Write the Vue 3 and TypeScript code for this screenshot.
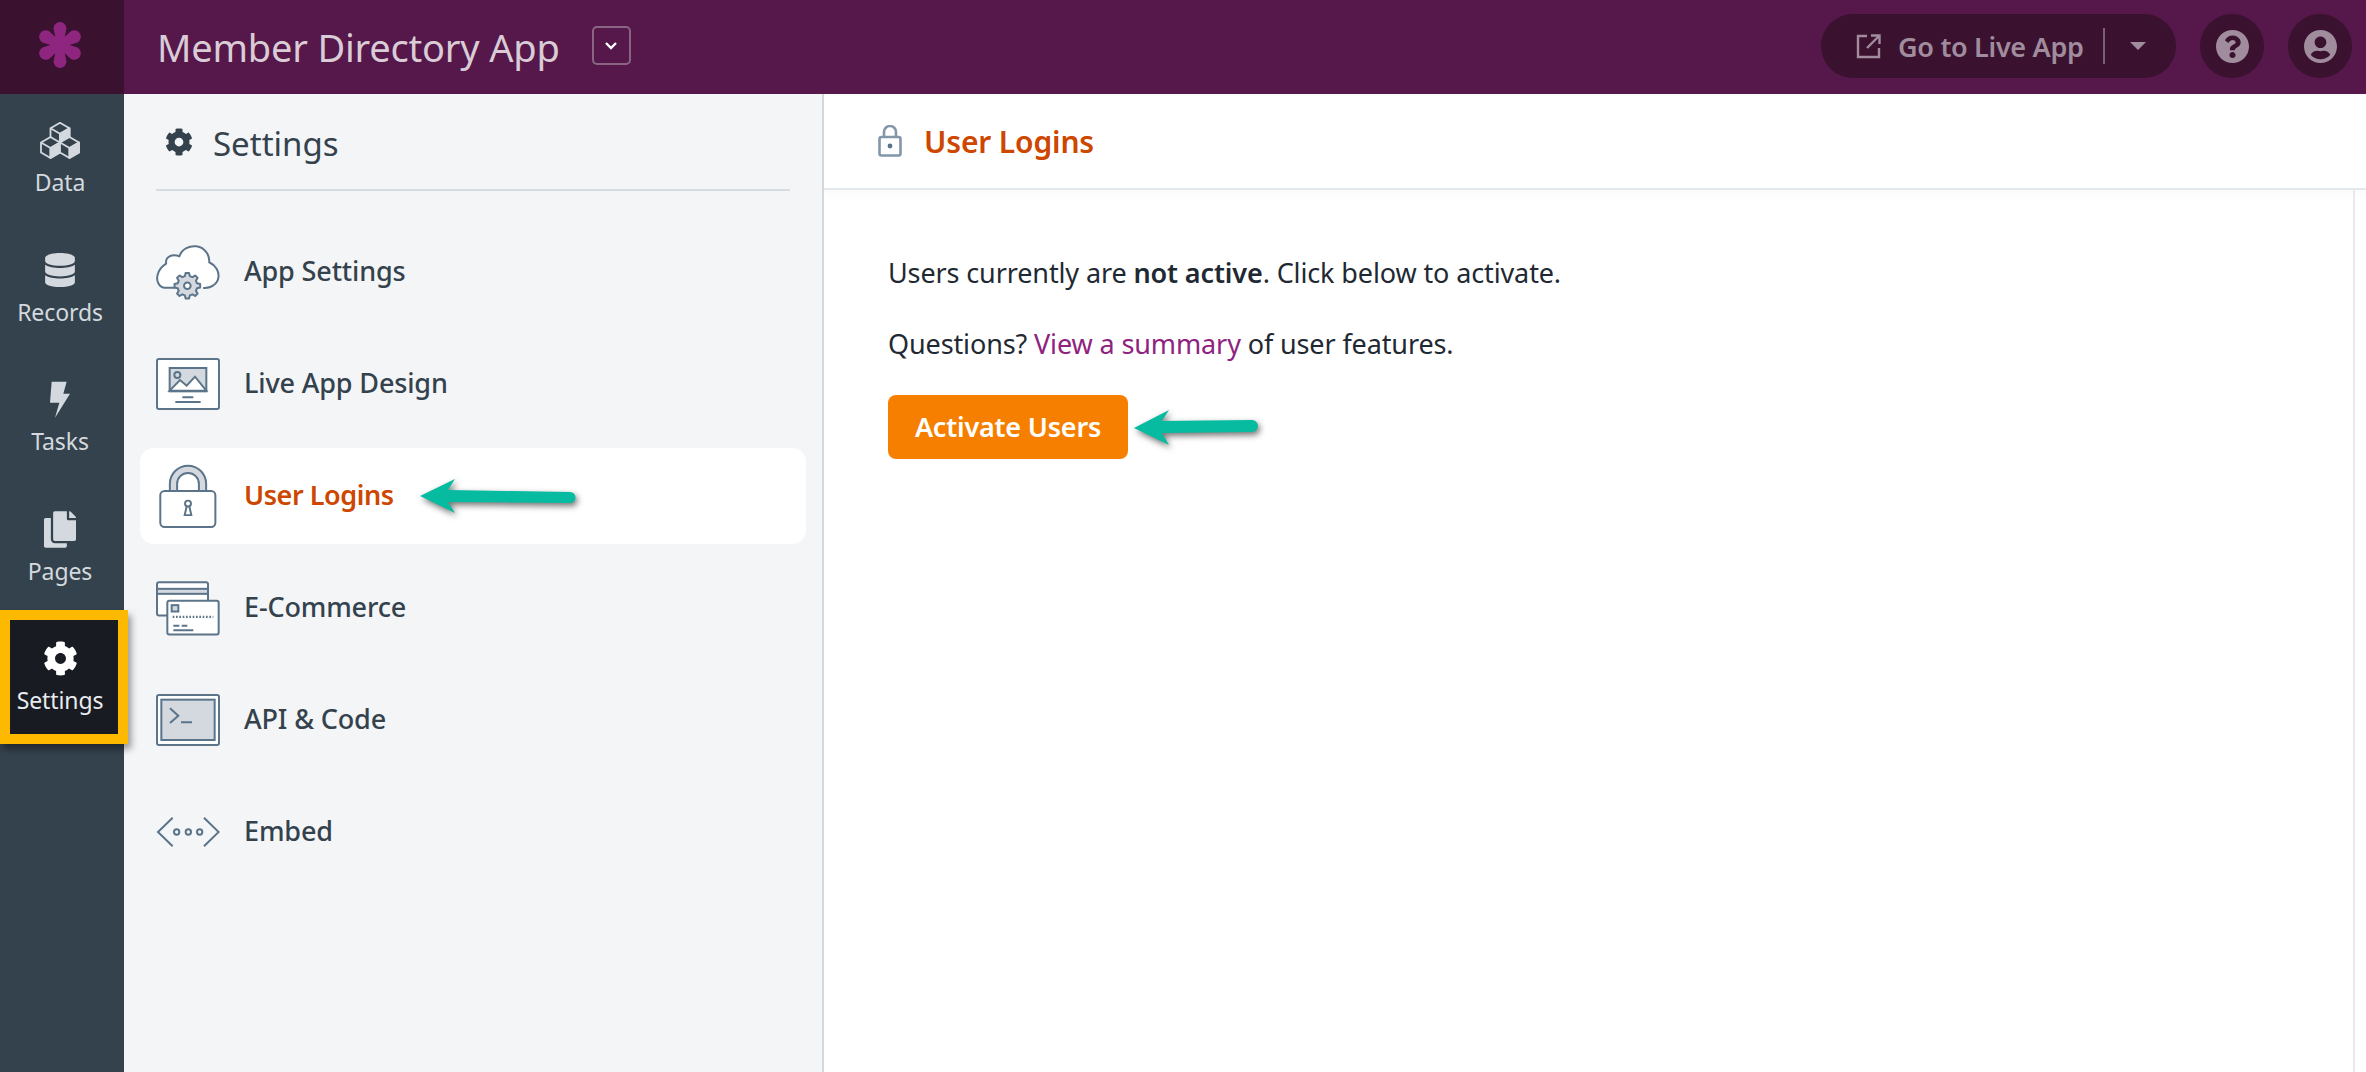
<script setup lang="ts">
const railItems = [
  { key: 'data', label: 'Data' },
  { key: 'records', label: 'Records' },
  { key: 'tasks', label: 'Tasks' },
  { key: 'pages', label: 'Pages' },
  { key: 'settings', label: 'Settings' },
]
const menuItems = [
  { key: 'app', label: 'App Settings' },
  { key: 'design', label: 'Live App Design' },
  { key: 'logins', label: 'User Logins' },
  { key: 'commerce', label: 'E-Commerce' },
  { key: 'api', label: 'API & Code' },
  { key: 'embed', label: 'Embed' },
]
const cubes = [
  { x: 20, y: 0.8 },
  { x: 10.5, y: 15 },
  { x: 29.5, y: 15 },
]
function cubeHex(c: { x: number; y: number }): string {
  return `M${c.x} ${c.y}l9.5 5.5v10l-9.5 5.5-9.5-5.5v-10z`
}
function cubeRight(c: { x: number; y: number }): string {
  return `M${c.x} ${c.y + 11}l9.5-5.5v10l-9.5 5.5z`
}
function cubeTop(c: { x: number; y: number }): string {
  return `M${c.x - 9.5} ${c.y + 5.5}l9.5 5.5 9.5-5.5M${c.x} ${c.y + 11}v10`
}
function gearPath(cx: number, cy: number, outer: number, inner: number, teeth: number): string {
  const pts: string[] = []
  const step = (Math.PI * 2) / teeth
  for (let i = 0; i < teeth; i++) {
    const a = i * step
    const list: [number, number][] = [
      [a - step * 0.32, inner],
      [a - step * 0.17, outer],
      [a + step * 0.17, outer],
      [a + step * 0.32, inner],
    ]
    for (const [t, r] of list) {
      pts.push(`${(cx + Math.cos(t) * r).toFixed(1)} ${(cy + Math.sin(t) * r).toFixed(1)}`)
    }
  }
  return 'M' + pts.join('L') + 'Z'
}
const smallGear = gearPath(172, 197, 39, 30, 8)
const cog =
  'M487.4 315.7l-42.6-24.6c4.3-23.2 4.3-47 0-70.2l42.6-24.6c4.9-2.8 7.1-8.6 5.5-14-11.1-35.6-30-67.8-54.7-94.6-3.8-4.1-10-5.1-14.8-2.3L380.8 110c-17.9-15.4-38.5-27.3-60.8-35.1V25.8c0-5.6-3.9-10.5-9.4-11.7-36.7-8.2-74.3-7.8-109.2 0-5.5 1.2-9.4 6.1-9.4 11.7V75c-22.2 7.9-42.8 19.8-60.8 35.1L88.7 85.5c-4.9-2.8-11-1.9-14.8 2.3-24.7 26.7-43.6 58.9-54.7 94.6-1.7 5.4.6 11.2 5.5 14L67.3 221c-4.3 23.2-4.3 47 0 70.2l-42.6 24.6c-4.9 2.8-7.1 8.6-5.5 14 11.1 35.6 30 67.8 54.7 94.6 3.8 4.1 10 5.1 14.8 2.3l42.6-24.6c17.9 15.4 38.5 27.3 60.8 35.1v49.2c0 5.6 3.9 10.5 9.4 11.7 36.7 8.2 74.3 7.8 109.2 0 5.5-1.2 9.4-6.1 9.4-11.7v-49.2c22.2-7.9 42.8-19.8 60.8-35.1l42.6 24.6c4.9 2.8 11 1.9 14.8-2.3 24.7-26.7 43.6-58.9 54.7-94.6 1.5-5.5-.7-11.3-5.6-14.1zM256 336c-44.1 0-80-35.9-80-80s35.9-80 80-80 80 35.9 80 80-35.9 80-80 80z'
</script>

<template>
  <div class="app">
    <header class="topbar">
      <div class="logo">
        <svg width="46" height="46" viewBox="-23 -23 46 46">
          <path
            v-for="a in [0, 60, 120, 180, 240, 300]"
            :key="a"
            :transform="`rotate(${a})`"
            d="M-3 0 L-6.5 -16.5 A6.5 6.5 0 0 1 6.5 -16.5 L3 0 Z"
            fill="#8e2680"
          />
        </svg>
      </div>
      <div class="app-title">Member Directory App</div>
      <button class="chev-btn">
        <svg width="14" height="10" viewBox="0 0 14 10"><path d="M2 2l5 5 5-5" fill="none" stroke="#fff" stroke-width="2.4" /></svg>
      </button>
      <div class="top-right">
        <div class="live-pill">
          <svg class="ext" width="25" height="25" viewBox="0 0 25 25" fill="none" stroke="#a08c9d" stroke-width="2.4">
            <path d="M11 2H2v21h21v-9" />
            <path d="M11 14L23 2M15 1.5h8.5V10" />
          </svg>
          <span>Go to Live App</span>
          <i class="pill-div"></i>
          <i class="caret"></i>
        </div>
        <div class="round">
          <svg width="33" height="33" viewBox="8 8 496 496"><path fill="#a08c9d" d="M504 256c0 136.997-111.043 248-248 248S8 392.997 8 256C8 119.083 119.043 8 256 8s248 111.083 248 248zM262.655 90c-54.497 0-89.255 22.957-116.549 63.758-3.536 5.286-2.353 12.415 2.715 16.258l34.699 26.31c5.205 3.947 12.621 3.008 16.665-2.122 17.864-22.658 30.113-35.797 57.303-35.797 20.429 0 45.698 13.148 45.698 32.958 0 14.976-12.363 22.667-32.534 33.976C247.128 238.528 216 254.941 216 296v4c0 6.627 5.373 12 12 12h56c6.627 0 12-5.373 12-12v-1.333c0-28.462 83.186-29.647 83.186-106.667 0-58.002-60.165-102-116.531-102zM256 338c-25.365 0-46 20.635-46 46 0 25.364 20.635 46 46 46s46-20.636 46-46c0-25.365-20.635-46-46-46z" /></svg>
        </div>
        <div class="round">
          <svg width="33" height="33" viewBox="0 8 496 496"><path fill="#a08c9d" d="M248 8C111 8 0 119 0 256s111 248 248 248 248-111 248-248S385 8 248 8zm0 96c48.6 0 88 39.4 88 88s-39.4 88-88 88-88-39.4-88-88 39.4-88 88-88zm0 344c-58.7 0-111.3-26.6-146.5-68.2 18.8-35.4 55.6-59.8 98.5-59.8 2.4 0 4.8.4 7.1 1.1 13 4.2 26.6 6.9 40.9 6.9 14.3 0 28-2.7 40.9-6.9 2.3-.7 4.7-1.1 7.1-1.1 42.9 0 79.7 24.4 98.5 59.8C359.3 421.4 306.7 448 248 448z" /></svg>
        </div>
      </div>
    </header>

    <div class="body">
      <nav class="rail">
        <div v-for="item in railItems" :key="item.key" class="rail-item" :class="{ current: item.key === 'settings' }">
          <div class="rail-icon">
            <svg v-if="item.key === 'data'" width="40" height="37" viewBox="0 0 40 37" stroke="#d3d9de" stroke-width="1.8" stroke-linejoin="round">
              <g v-for="(c, i) in cubes" :key="i">
                <path :d="cubeHex(c)" fill="#34424d" />
                <path :d="cubeRight(c)" fill="#d3d9de" />
                <path :d="cubeTop(c)" fill="none" />
              </g>
            </svg>
            <svg v-else-if="item.key === 'records'" width="30" height="34" viewBox="0 0 448 512"><path fill="#d3d9de" d="M448 73.143v45.714C448 159.143 347.667 192 224 192S0 159.143 0 118.857V73.143C0 32.857 100.333 0 224 0s224 32.857 224 73.143zM448 176v102.857C448 319.143 347.667 352 224 352S0 319.143 0 278.857V176c48.125 33.143 136.208 48.572 224 48.572S399.874 209.143 448 176zm0 160v102.857C448 479.143 347.667 512 224 512S0 479.143 0 438.857V336c48.125 33.143 136.208 48.572 224 48.572S399.874 369.143 448 336z" /></svg>
            <svg v-else-if="item.key === 'tasks'" width="20" height="37" viewBox="150 60 60 110"><path fill="#d3d9de" d="M155 62h45l-10 36h20l-45 72 13-45h-28z" /></svg>
            <svg v-else-if="item.key === 'pages'" width="32" height="37" viewBox="0 0 448 512"><path fill="#d3d9de" d="M320 448v40c0 13.255-10.745 24-24 24H24c-13.255 0-24-10.745-24-24V120c0-13.255 10.745-24 24-24h72v296c0 30.879 25.121 56 56 56h168zm0-344V0H152c-13.255 0-24 10.745-24 24v368c0 13.255 10.745 24 24 24h272c13.255 0 24-10.745 24-24V128H344c-13.2 0-24-10.8-24-24zm120.971-31.029L375.029 7.029A24 24 0 0 0 358.059 0H352v96h96v-6.059a24 24 0 0 0-7.029-16.97z" /></svg>
            <svg v-else width="35" height="35" viewBox="0 0 512 512"><path fill="#fff" :d="cog" /></svg>
          </div>
          <div class="rail-label">{{ item.label }}</div>
        </div>
      </nav>

      <aside class="side">
        <div class="side-head">
          <svg width="28" height="28" viewBox="0 0 512 512"><path fill="#34424d" :d="cog" /></svg>
          <span>Settings</span>
        </div>
        <ul class="menu">
          <li v-for="m in menuItems" :key="m.key" class="menu-row" :class="{ on: m.key === 'logins' }">
            <span class="menu-icon">
              <svg v-if="m.key === 'app'" width="64" height="55" viewBox="78 74 192 166" fill="none" stroke="#5b7489" stroke-width="6" stroke-linecap="round">
                <path fill="#fff" d="M133 203H105C85 203 78 180 82 165C86 145 100 135 108 130C105 110 125 100 148 108C155 85 180 75 200 78C225 82 240 105 238 126C258 135 268 155 266 170C264 190 245 205 222 204" />
                <path :d="smallGear" fill="#d3d9de" stroke-linejoin="round" />
                <circle cx="172" cy="197" r="10" fill="#fff" />
              </svg>
              <svg v-else-if="m.key === 'design'" width="64" height="52" viewBox="78 414 192 156" fill="none" stroke="#5b7489" stroke-width="6">
                <rect x="81" y="417" width="186" height="150" rx="6" fill="#fff" />
                <rect x="119" y="444" width="110" height="70" fill="#d3d9de" />
                <path d="M119 512l31-32 20 17 25-27 34 42z" fill="#fff" />
                <circle cx="142" cy="465" r="9" />
                <path d="M157 532h33M136 546h76" />
              </svg>
              <svg v-else-if="m.key === 'logins'" width="58" height="64" viewBox="88 100 174 194" fill="none" stroke="#5b7489" stroke-width="6">
                <path d="M120 182V160A55 55 0 0 1 230 160V182H208V160A33 33 0 0 0 142 160V182Z" fill="#d3d9de" />
                <rect x="91" y="182" width="167" height="109" rx="13" fill="#fff" />
                <circle cx="175" cy="220" r="9" />
                <path d="M171 228l-6 27h20l-6-27" />
              </svg>
              <svg v-else-if="m.key === 'commerce'" width="64" height="55" viewBox="78 454 192 164" fill="none" stroke="#5b7489" stroke-width="6">
                <rect x="81" y="457" width="153" height="100" rx="6" fill="#fff" />
                <rect x="81" y="477" width="153" height="15" fill="#d3d9de" />
                <rect x="112" y="513" width="154" height="101" rx="6" fill="#fff" />
                <rect x="125" y="526" width="20" height="19" fill="#d3d9de" />
                <path d="M128 561h122" stroke-width="7" stroke-dasharray="5 5" />
                <path d="M130 588h18M155 588h17M130 601h60" />
              </svg>
              <svg v-else-if="m.key === 'api'" width="64" height="52" viewBox="78 132 192 156" fill="none" stroke="#5b7489" stroke-width="6">
                <rect x="81" y="135" width="186" height="150" rx="6" fill="#fff" />
                <rect x="94" y="149" width="160" height="121" fill="#d3d9de" />
                <path d="M120 175l25 22-25 22M153 217h33" />
              </svg>
              <svg v-else width="64" height="32" viewBox="78 500 192 92" fill="none" stroke="#5b7489" stroke-width="6">
                <path d="M128 503L84 546l44 43M222 503l44 43-44 43" />
                <circle cx="140" cy="546" r="8" />
                <circle cx="175" cy="546" r="8" />
                <circle cx="209" cy="546" r="8" />
              </svg>
            </span>
            <span class="menu-text">{{ m.label }}</span>
            <svg v-if="m.key === 'logins'" class="arrow arrow-a" width="160" height="36" viewBox="0 0 160 36">
              <path class="arrow-fill" d="M2 17L37 0 30 11 152 13a5.5 5.5 0 0 1 0 11L30 23l7 11Z" />
            </svg>
          </li>
        </ul>
      </aside>

      <main class="main">
        <div class="main-head">
          <svg width="24" height="32" viewBox="0 0 24 32" fill="none" stroke="#8397a8" stroke-width="2.6">
            <path d="M6 13V7a6 6 0 0 1 12 0v6" />
            <rect x="1.5" y="12" width="21" height="18.5" rx="2" />
            <circle cx="12" cy="21" r="2.4" fill="#5b7489" stroke="none" />
          </svg>
          <span>User Logins</span>
        </div>
        <div class="main-body">
          <p class="line one">Users currently are <b>not active</b>. Click below to activate.</p>
          <p class="line two">Questions? <a>View a summary</a> of user features.</p>
          <div class="action">
            <button class="activate">Activate Users</button>
            <svg class="arrow arrow-b" width="130" height="38" viewBox="0 0 130 38">
              <path class="arrow-fill" d="M1 19L36 1 29 12 119 11a6 6 0 0 1 0 12L29 24l7 12Z" />
            </svg>
          </div>
        </div>
      </main>
    </div>
  </div>
</template>

<style scoped>
.app {
  width: 2366px;
  height: 1072px;
  display: flex;
  flex-direction: column;
  overflow: hidden;
  font-family: "Noto Sans", "Open Sans", sans-serif;
  background: #fff;
}
.topbar {
  height: 94px;
  flex: none;
  background: #56174a;
  display: flex;
  align-items: center;
}
.logo {
  width: 124px;
  height: 94px;
  background: #3a112f;
  display: flex;
  align-items: center;
  justify-content: center;
}
.logo svg {
  margin: -4px 4px 0 0;
}
.app-title {
  margin-left: 33px;
  font-size: 38px;
  letter-spacing: -0.2px;
  color: #d9ccd6;
  line-height: 94px;
}
.chev-btn {
  margin-left: 32px;
  width: 39px;
  height: 39px;
  margin-top: -3px;
  padding: 0;
  background: transparent;
  border: 2px solid #8a6583;
  border-radius: 5px;
  display: flex;
  align-items: center;
  justify-content: center;
}
.top-right {
  margin-left: auto;
  display: flex;
  align-items: center;
  gap: 24px;
  padding-right: 14px;
  margin-top: -2px;
}
.live-pill {
  width: 355px;
  height: 64px;
  box-sizing: border-box;
  border-radius: 32px;
  background: #3a112f;
  color: #a08c9d;
  display: flex;
  align-items: center;
  padding-left: 35px;
  font-size: 27px;
  font-weight: 600;
  letter-spacing: -0.3px;
}
.live-pill span {
  margin-left: 17px;
}
.pill-div {
  width: 2px;
  height: 36px;
  background: #7b5f76;
  margin-left: 19px;
}
.caret {
  margin-left: 25px;
  border-left: 8px solid transparent;
  border-right: 8px solid transparent;
  border-top: 8px solid #a08c9d;
}
.round {
  width: 64px;
  height: 64px;
  border-radius: 50%;
  background: #3a112f;
  display: flex;
  align-items: center;
  justify-content: center;
}
.body {
  flex: 1;
  display: flex;
  min-height: 0;
}
.rail {
  width: 124px;
  flex: none;
  background: #34424d;
  padding-top: 8px;
  display: flex;
  flex-direction: column;
  gap: 15.5px;
  position: relative;
  z-index: 2;
}
.rail-item {
  width: 120px;
  height: 114px;
  position: relative;
  display: flex;
  flex-direction: column;
  align-items: center;
  color: #d3d9de;
}
.rail-item.current {
  color: #e8ebee;
}
.rail-item.current::before {
  content: "";
  position: absolute;
  left: 10px;
  top: 0;
  width: 108px;
  height: 114px;
  background: #181b21;
  box-shadow: 0 0 0 10px #fdb900, 3px 5px 7px 10px rgba(0, 0, 0, 0.4);
}
.rail-icon {
  position: relative;
  height: 37px;
  margin-top: 20px;
  display: flex;
  align-items: center;
  justify-content: center;
}
.rail-label {
  position: relative;
  font-size: 23px;
  line-height: 30px;
  margin-top: 8px;
  letter-spacing: -0.1px;
}
.side {
  width: 700px;
  flex: none;
  box-sizing: border-box;
  background: #f4f5f7;
  border-right: 2px solid #d5d9de;
  padding: 0 16px;
}
.side-head {
  margin: 0 16px 33px;
  height: 97px;
  box-sizing: border-box;
  border-bottom: 2px solid #d5dce2;
  display: flex;
  align-items: center;
  gap: 20px;
  padding-left: 9px;
  padding-top: 3px;
  color: #34424d;
  font-size: 33px;
}
.side-head svg {
  margin-top: -2px;
}
.menu {
  list-style: none;
  margin: 0;
  padding: 0;
  display: flex;
  flex-direction: column;
  gap: 16px;
}
.menu-row {
  position: relative;
  height: 96px;
  border-radius: 14px;
  padding-left: 16px;
  display: flex;
  align-items: center;
  color: #34424d;
  font-size: 27px;
  font-weight: 500;
  letter-spacing: -0.15px;
}
.menu-row.on {
  background: #fff;
  color: #cd4700;
  font-weight: 600;
  letter-spacing: -0.45px;
}
.menu-text {
  margin-top: -3px;
}
.menu-icon {
  width: 64px;
  flex: none;
  margin-right: 24px;
  display: flex;
  justify-content: center;
  align-items: center;
}
.arrow {
  position: absolute;
  overflow: visible;
}
.arrow-a {
  left: 278px;
  top: 31px;
}
.arrow-fill {
  fill: #06bba0;
  filter: drop-shadow(2px 3px 3px rgba(0, 0, 0, 0.55));
}
.main {
  flex: 1;
  min-width: 0;
  display: flex;
  flex-direction: column;
}
.main-head {
  height: 96px;
  flex: none;
  box-sizing: border-box;
  border-bottom: 2px solid #e3e8ec;
  box-shadow: 0 4px 8px rgba(0, 0, 0, 0.025);
  display: flex;
  align-items: center;
  padding-left: 54px;
  gap: 22px;
  color: #cd4700;
  font-size: 30px;
  font-weight: 600;
  letter-spacing: -0.15px;
}
.main-head span {
  margin-top: 1px;
}
.main-body {
  flex: 1;
  margin-right: 11px;
  border-right: 2px solid #e7eaed;
  padding: 0 0 0 64px;
}
.line {
  margin: 0;
  font-size: 27px;
  line-height: 36px;
  color: #1f2933;
  letter-spacing: -0.12px;
}
.line b {
  font-weight: 600;
}
.line a {
  color: #8e2380;
}
.one {
  margin-top: 65px;
}
.two {
  margin-top: 35px;
}
.action {
  position: relative;
  margin-top: 33px;
}
.arrow-b {
  left: 245px;
  top: 14px;
}
.activate {
  display: block;
  width: 240px;
  height: 64px;
  border: 0;
  border-radius: 8px;
  background: #f77f00;
  color: #fff;
  font-family: inherit;
  font-size: 27px;
  font-weight: 600;
  letter-spacing: -0.2px;
  padding: 0 0 2px;
}
</style>
